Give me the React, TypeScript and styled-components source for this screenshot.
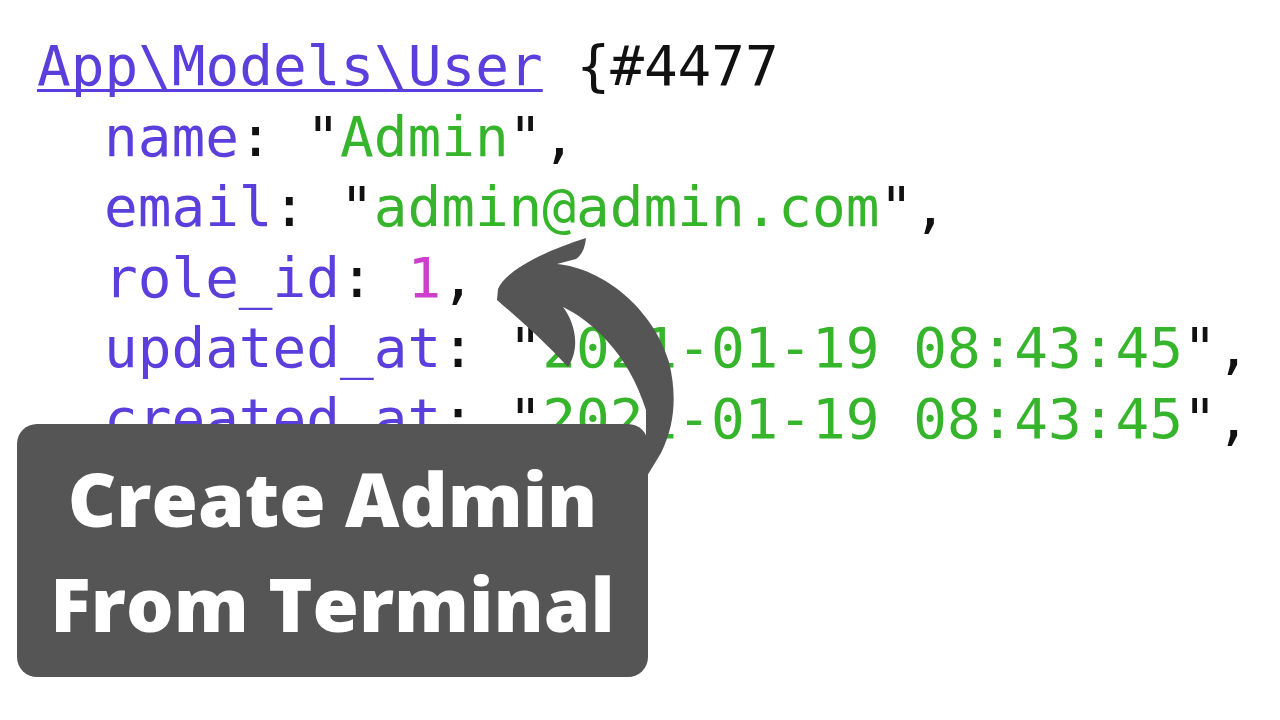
import React from "react";
import styled, { createGlobalStyle } from "styled-components";

const Global = createGlobalStyle`
  html, body { margin: 0; padding: 0; background: #ffffff; }
  body { width: 1280px; height: 720px; overflow: hidden; }
`;

const Page = styled.div`
  position: relative;
  width: 1280px;
  height: 720px;
  background: #ffffff;
  overflow: hidden;
`;

const Code = styled.pre`
  margin: 0;
  padding: 31px 0 0 37px;
  font-family: "DejaVu Sans Mono", "Liberation Mono", monospace;
  font-size: 56px;
  line-height: 70.5px;
  color: #111111;
  white-space: pre;
`;

const Line = styled.div<{ $indent?: boolean }>`
  padding-left: ${(p) => (p.$indent ? "67px" : "0")};
`;

const ClassName = styled.span`
  color: #5a3fdc;
  text-decoration: underline;
  text-decoration-thickness: 3px;
  text-underline-offset: 4px;
  text-decoration-skip-ink: none;
`;

const Key = styled.span`
  color: #5a3fdc;
`;

const Str = styled.span`
  color: #36b52c;
`;

const Num = styled.span`
  color: #cc3fcc;
`;

const Badge = styled.div`
  position: absolute;
  left: 17px;
  top: 424px;
  width: 631px;
  height: 253px;
  border-radius: 20px;
  background: #555555;
  display: flex;
  flex-direction: column;
  align-items: center;
  justify-content: center;
  font-family: "Open Sans", "Noto Sans", sans-serif;
  font-weight: 800;
  font-size: 75px;
  line-height: 105px;
  color: #ffffff;
  text-align: center;
`;

const ArrowSvg = styled.svg`
  position: absolute;
  left: 0;
  top: 0;
`;

export default function App() {
  return (
    <Page>
      <Global />
      <Code>
        <Line>
          <ClassName>App\Models\User</ClassName> {"{#4477"}
        </Line>
        <Line $indent>
          <Key>name</Key>: "<Str>Admin</Str>",
        </Line>
        <Line $indent>
          <Key>email</Key>: "<Str>admin@admin.com</Str>",
        </Line>
        <Line $indent>
          <Key>role_id</Key>: <Num>1</Num>,
        </Line>
        <Line $indent>
          <Key>updated_at</Key>: "<Str>2021-01-19 08:43:45</Str>",
        </Line>
        <Line $indent>
          <Key>created_at</Key>: "<Str>2021-01-19 08:43:45</Str>",
        </Line>
      </Code>
      <ArrowSvg width="1280" height="720" viewBox="0 0 1280 720">
        <path
          fill="#555555"
          d="M497,300 L498,289 C506,270 545,251 586,238 C585,248 582,255 576,259 L557,264 C602,268 653,308 669,362 C677,395 675,425 661,453 L647,476 L630,476 L646,445 L646,410 C628,352 590,320 563,307 C573,320 582,345 568,367 C545,342 520,320 497,300 Z"
        />
      </ArrowSvg>
      <Badge>
        <div>Create Admin</div>
        <div>From Terminal</div>
      </Badge>
    </Page>
  );
}
